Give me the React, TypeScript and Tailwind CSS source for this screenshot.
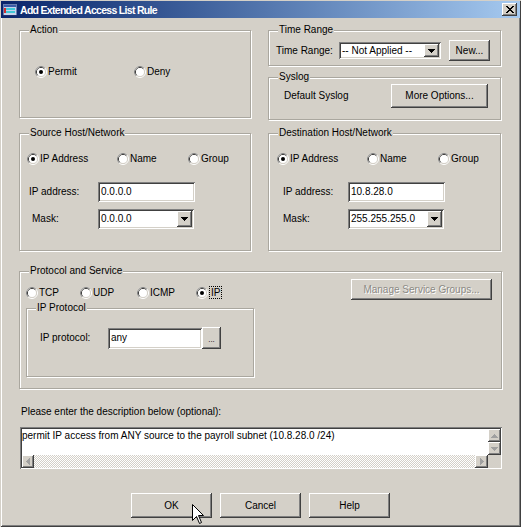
import React from 'react';

const raised =
  'bg-[#d4d0c8] shadow-[inset_-1px_-1px_#404040,inset_1px_1px_#ffffff,inset_-2px_-2px_#808080,inset_2px_2px_#d4d0c8]';
const sunken =
  'bg-white shadow-[inset_1px_1px_#808080,inset_-1px_-1px_#ffffff,inset_2px_2px_#404040,inset_-2px_-2px_#d4d0c8]';

function RadioDot({ checked }: { checked?: boolean }) {
  return (
    <svg width="12" height="12" viewBox="0 0 12 12" className="shrink-0">
      <circle cx="6" cy="6" r="5.5" fill="none" stroke="#ffffff" />
      <path d="M2.11 9.89A5.5 5.5 0 0 1 9.89 2.11" fill="none" stroke="#808080" />
      <circle cx="6" cy="6" r="4.5" fill="none" stroke="#d4d0c8" />
      <path d="M2.82 9.18A4.5 4.5 0 0 1 9.18 2.82" fill="none" stroke="#404040" />
      <circle cx="6" cy="6" r="4" fill="#ffffff" />
      {checked && <circle cx="6" cy="6" r="2" fill="#000000" />}
    </svg>
  );
}

function Radio({
  label,
  checked,
  focus,
  className = '',
}: {
  label: string;
  checked?: boolean;
  focus?: boolean;
  className?: string;
}) {
  return (
    <div className={`flex items-center ${className}`}>
      <RadioDot checked={checked} />
      <span className={focus ? 'ml-[1px] border border-dotted border-black px-[1px] leading-[11px]' : 'ml-[1px]'}>
        {label}
      </span>
    </div>
  );
}

function Group({
  title,
  className = '',
  children,
}: {
  title: string;
  className?: string;
  children?: React.ReactNode;
}) {
  return (
    <div className={`relative border border-[#aaa79f] shadow-[inset_1px_1px_#ffffff,1px_1px_#ffffff] ${className}`}>
      <span className="absolute -top-[7px] left-[9px] bg-[#d4d0c8] px-[1px] leading-[12px] whitespace-nowrap">
        {title}
      </span>
      {children}
    </div>
  );
}

function DownArrow({ color = '#000000' }: { color?: string }) {
  return (
    <svg width="7" height="4" viewBox="0 0 7 4" shapeRendering="crispEdges">
      <path d="M0 0h7v1h-1v1h-1v1h-1v1h-1v-1h-1v-1h-1v-1h-1z" fill={color} />
    </svg>
  );
}

function Select({ value, className = '' }: { value: string; className?: string }) {
  return (
    <div className={`flex items-stretch p-[2px] ${sunken} ${className}`}>
      <span className="flex-1 flex items-center pl-[1px] whitespace-nowrap overflow-hidden">{value}</span>
      <div className={`w-[15px] flex items-center justify-center ${raised}`}>
        <DownArrow />
      </div>
    </div>
  );
}

function Input({ value, className = '' }: { value: string; className?: string }) {
  return (
    <div className={`flex items-center px-[2px] pl-[3px] whitespace-nowrap ${sunken} ${className}`}>{value}</div>
  );
}

function Button({ children, className = '' }: { children: React.ReactNode; className?: string }) {
  return <div className={`flex items-center justify-center whitespace-nowrap ${raised} ${className}`}>{children}</div>;
}

function ScrollArrow({ dir }: { dir: 'up' | 'down' | 'left' | 'right' }) {
  const paths = {
    up: 'M3 0h1v1h1v1h1v1h1v1h-7v-1h1v-1h1v-1h1z',
    down: 'M0 0h7v1h-1v1h-1v1h-1v1h-1v-1h-1v-1h-1v-1h-1z',
    left: 'M3 0h1v7h-1v-1h-1v-1h-1v-1h-1v-1h1v-1h1v-1h1z',
    right: 'M0 0h1v1h1v1h1v1h1v1h-1v1h-1v1h-1v1h-1z',
  };
  const vertical = dir === 'up' || dir === 'down';
  return (
    <svg
      width={vertical ? 7 : 4}
      height={vertical ? 4 : 7}
      viewBox={vertical ? '0 0 7 4' : '0 0 4 7'}
      shapeRendering="crispEdges"
    >
      <path d={paths[dir]} fill="#a0a0a0" />
    </svg>
  );
}

function TitleIcon() {
  return (
    <svg width="14" height="14" viewBox="0 0 14 14" shapeRendering="crispEdges">
      <rect x="0" y="1" width="14" height="12" fill="#6b7fb0" />
      <rect x="1" y="2" width="12" height="10" fill="#c8d4ec" />
      <rect x="1" y="2" width="12" height="2" fill="#3a5ba8" />
      <rect x="3" y="5" width="9" height="2" fill="#40c8d8" />
      <rect x="3" y="8" width="9" height="2" fill="#40c8d8" />
      <rect x="1" y="5" width="2" height="5" fill="#d03030" />
      <rect x="0" y="12" width="14" height="1" fill="#203070" />
    </svg>
  );
}

function Cursor() {
  return (
    <svg width="13" height="20" viewBox="0 0 13 20" className="absolute left-[192px] top-[504px]">
      <path
        d="M0.5 0.5V16.5L4.5 12.5L7.5 19.5L9.5 18.5L6.5 11.5H11.5Z"
        fill="#ffffff"
        stroke="#000000"
        strokeWidth="1"
        strokeLinejoin="miter"
      />
    </svg>
  );
}

export default function App() {
  return (
    <div className="relative w-[521px] h-[527px] bg-[#d4d0c8] text-[10px] leading-[12px] text-black font-['Liberation_Sans',Arial,sans-serif] shadow-[inset_1px_1px_#d4d0c8,inset_-1px_-1px_#404040,inset_2px_2px_#ffffff,inset_-2px_-2px_#808080] flex flex-col">
      {/* title bar */}
      <div className="mx-[1px] mt-[1px] h-[17px] flex items-center pl-[2px] pr-[3px] bg-linear-to-r from-[#0a246a] to-[#a6caf0]">
        <TitleIcon />
        <span className="ml-[3px] text-white font-bold text-[10.5px] tracking-[-0.7px] whitespace-nowrap">
          Add Extended Access List Rule
        </span>
        <div className={`ml-auto w-[15px] h-[13px] flex items-center justify-center ${raised}`}>
          <svg width="8" height="7" viewBox="0 0 8 7" shapeRendering="crispEdges">
            <path
              d="M0 0h2v1h1v1h2v-1h1v-1h2v1h-1v1h-1v1h-1v1h1v1h1v1h1v1h-2v-1h-1v-1h-2v1h-1v1h-2v-1h1v-1h1v-1h1v-1h-1v-1h-1v-1h-1z"
              fill="#000000"
            />
          </svg>
        </div>
      </div>

      <div className="pl-[19px] flex flex-col">
        {/* row 1 */}
        <div className="mt-[12px] flex items-start gap-[17px]">
          <Group title="Action" className="w-[232px] h-[88px]">
            <div className="flex pt-[35px] pl-[15px]">
              <Radio label="Permit" checked className="w-[99px]" />
              <Radio label="Deny" />
            </div>
          </Group>
          <div className="w-[233px] flex flex-col gap-[11px]">
            <Group title="Time Range" className="h-[36px]">
              <div className="mt-[9px] h-[21px] flex items-center pl-[7px]">
                <span className="w-[63px]">Time Range:</span>
                <Select value="-- Not Applied --" className="w-[102px] h-[17px]" />
                <Button className="ml-[8px] w-[41px] h-[21px]">New...</Button>
              </div>
            </Group>
            <Group title="Syslog" className="h-[43px]">
              <div className="mt-[6px] h-[24px] flex items-center pl-[15px]">
                <span className="w-[107px]">Default Syslog</span>
                <Button className="w-[97px] h-[24px]">More Options...</Button>
              </div>
            </Group>
          </div>
        </div>

        {/* row 2 */}
        <div className="mt-[13px] flex items-start gap-[17px]">
          <Group title="Source Host/Network" className="w-[232px] h-[118px]">
            <div className="mt-[19px] pl-[7px] flex">
              <Radio label="IP Address" checked className="w-[90px]" />
              <Radio label="Name" className="w-[71px]" />
              <Radio label="Group" />
            </div>
            <div className="mt-[17px] h-[20px] pl-[9px] flex items-center">
              <span className="w-[69px]">IP address:</span>
              <Input value="0.0.0.0" className="w-[97px] h-[20px]" />
            </div>
            <div className="mt-[7px] h-[20px] pl-[9px] flex items-center">
              <span className="w-[69px] pl-[3px]">Mask:</span>
              <Select value="0.0.0.0" className="w-[96px] h-[20px]" />
            </div>
          </Group>
          <Group title="Destination Host/Network" className="w-[233px] h-[118px]">
            <div className="mt-[19px] pl-[8px] flex">
              <Radio label="IP Address" checked className="w-[90px]" />
              <Radio label="Name" className="w-[71px]" />
              <Radio label="Group" />
            </div>
            <div className="mt-[17px] h-[20px] pl-[14px] flex items-center">
              <span className="w-[65px]">IP address:</span>
              <Input value="10.8.28.0" className="w-[97px] h-[20px]" />
            </div>
            <div className="mt-[7px] h-[20px] pl-[14px] flex items-center">
              <span className="w-[65px]">Mask:</span>
              <Select value="255.255.255.0" className="w-[96px] h-[20px]" />
            </div>
          </Group>
        </div>

        {/* row 3 */}
        <Group title="Protocol and Service" className="mt-[20px] w-[483px] h-[118px]">
          <div className="flex items-start justify-between">
            <div className="mt-[14px] pl-[6px] flex">
              <Radio label="TCP" className="w-[54px]" />
              <Radio label="UDP" className="w-[57px]" />
              <Radio label="ICMP" className="w-[59px]" />
              <Radio label="IP" checked focus />
            </div>
            <Button className="mt-[7px] mr-[9px] w-[141px] h-[21px] text-[#8c8a85] [text-shadow:1px_1px_0_#ffffff]">
              Manage Service Groups...
            </Button>
          </div>
          <Group title="IP Protocol" className="mt-[8px] ml-[6px] w-[228px] h-[69px]">
            <div className="mt-[18px] h-[22px] pl-[13px] flex items-center">
              <span className="w-[68px]">IP protocol:</span>
              <Input value="any" className="w-[94px] h-[21px]" />
              <Button className="w-[19px] h-[22px] text-[8px] pt-[3px]">...</Button>
            </div>
          </Group>
        </Group>

        <div className="mt-[17px] ml-[2px]">Please enter the description below (optional):</div>

        {/* description */}
        <div className={`mt-[9px] ml-[1px] w-[482px] h-[42px] pt-[2px] pl-[2px] pr-[1px] pb-[1px] flex ${sunken}`}>
          <div className="flex-1 flex flex-col">
            <div className="flex-1 pt-[1px] whitespace-nowrap overflow-hidden">
              permit IP access from ANY source to the payroll subnet (10.8.28.0 /24)
            </div>
            <div className="h-[13px] flex">
              <Button className="w-[12px] h-[13px]">
                <ScrollArrow dir="left" />
              </Button>
              <div className="flex-1 bg-[image:repeating-conic-gradient(#ffffff_0_25%,#d4d0c8_0_50%)] bg-[length:2px_2px]" />
              <Button className="w-[13px] h-[13px]">
                <ScrollArrow dir="right" />
              </Button>
            </div>
          </div>
          <div className="w-[13px] flex flex-col bg-[#d4d0c8]">
            <Button className="h-[13px]">
              <ScrollArrow dir="up" />
            </Button>
            <Button className="h-[13px]">
              <ScrollArrow dir="down" />
            </Button>
          </div>
        </div>
      </div>

      {/* buttons */}
      <div className="mt-[24px] flex justify-center gap-[8px]">
        <Button className="w-[81px] h-[25px]">OK</Button>
        <Button className="w-[81px] h-[25px]">Cancel</Button>
        <Button className="w-[81px] h-[25px]">Help</Button>
      </div>

      <Cursor />
    </div>
  );
}
